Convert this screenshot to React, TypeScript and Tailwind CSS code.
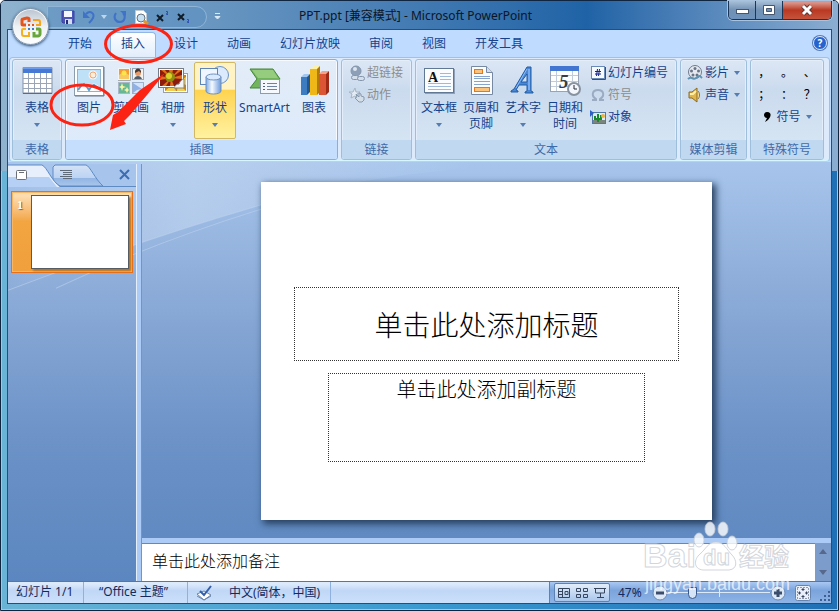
import type { ReactNode } from "react"
import clsx from "clsx"

const tabs = ["开始", "插入", "设计", "动画", "幻灯片放映", "审阅", "视图", "开发工具"]

function Icon({ size = 16, children }: { size?: number; children: ReactNode }) {
  return (
    <svg width={size} height={size} viewBox={`0 0 ${size} ${size}`} className="shrink-0" aria-hidden="true">
      {children}
    </svg>
  )
}

function Arrow() {
  return (
    <svg width="6" height="4" viewBox="0 0 6 4" className="shrink-0" aria-hidden="true">
      <path d="M0 0h6L3 4z" fill="#567db1" />
    </svg>
  )
}

/* ---------- large ribbon icons ---------- */

const TableIcon = () => (
  <Icon size={32}>
    <rect x="2" y="3" width="29" height="25" fill="#fff" stroke="#8291a8" />
    <rect x="2" y="2" width="29" height="6" fill="#4679d3" />
    <rect x="2" y="2" width="29" height="2" fill="#6b9bea" />
    <path d="M2 13.500h29M2 18.500h29M2 23.500h29M7.500 8v20M13.500 8v20M19.500 8v20M25.500 8v20" stroke="#9aa6b8" />
    <path d="M2 28.500h29" stroke="#5b6b84" />
  </Icon>
)

const PictureIcon = () => (
  <Icon size={32}>
    <rect x="1.500" y="1.500" width="29" height="29" fill="#fdfeff" stroke="#8e9dab" />
    <path d="M2 31h29V2" fill="none" stroke="#66788a" />
    <rect x="4.500" y="4.500" width="23" height="22" fill="#bfe1f8" stroke="#8fb4d0" />
    <circle cx="20" cy="10" r="4.500" fill="#fff" opacity=".7" />
    <circle cx="20" cy="10" r="3" fill="#fdeedd" stroke="#f3a673" />
    <path d="M5 25c4-9 7-9 11-2 3-6 6-6 11 0v3H5z" fill="#fff" />
    <path d="M5 25l3-4 3-2 3 3 2 3 2-3 3-2 3 2 3 3" stroke="#5c9ac9" strokeWidth="2" fill="none" />
  </Icon>
)

const ClipArtIcon = () => (
  <Icon size={32}>
    <rect x="3.500" y="3.500" width="11" height="11" fill="#f59a35" stroke="#f2f5f8" />
    <path d="M4 10c4-3 7-2 10 0v4H4z" fill="#f7c95e" />
    <circle cx="9" cy="8" r="2.500" fill="#fbe54d" />
    <path d="M3 15.500h12.500V3" fill="none" stroke="#a5a9b0" />
    <rect x="17.500" y="3.500" width="11" height="11" fill="#f4f2ee" stroke="#9aa7b8" />
    <circle cx="23" cy="8" r="3" fill="#e79a68" />
    <path d="M20 8c-1-6 7-6 6 0l-2-2z" fill="#463932" />
    <path d="M19 14c1-4 7-4 8 0z" fill="#555c69" />
    <rect x="3.500" y="17.500" width="11" height="11" fill="#66b795" stroke="#aab7c6" />
    <path d="M7 18l1 3 3 1-3 1-1 3-1-3-2-1 2-1zM12 22l1 2 1 1-1 1-1 2-1-2-2-1 2-1z" fill="#f8f4a4" />
    <rect x="17.500" y="17.500" width="11" height="11" fill="#d5e3f8" stroke="#9db0cb" />
    <path d="M18 18l9 6-5 1-4 3z" fill="#8fb1e8" />
  </Icon>
)

const AlbumIcon = () => (
  <Icon size={32}>
    <rect x="6.500" y="8.500" width="24" height="19" fill="#fff" stroke="#9ba0a8" />
    <rect x="8" y="10" width="21" height="16" fill="#c68418" />
    <path d="M8 26l8-7 3 7zM20 26l1-8 8 8zM22 17l7-5v8z" fill="#f2ce4c" />
    <rect x="1.500" y="3.500" width="25" height="19" fill="#fff" stroke="#777d88" />
    <rect x="3" y="5" width="22" height="16" fill="#8c1b0c" />
    <path d="M14 13L4 5h4zM14 13L12 5h4zM14 13l7-8h4zM14 13l11-3v4zM14 13L3 11v4zM14 13L5 21h4zM14 13l-1 8h4z" fill="#e0701c" />
    <circle cx="13" cy="12" r="5" fill="#8d8d10" />
    <circle cx="12" cy="11" r="3" fill="#e0cf27" />
    <path d="M17 23c1-3 3-4 5-4 1-3 3-5 5-5v9z" fill="#f2f4f6" stroke="#838890" />
  </Icon>
)

const ShapesIcon = () => (
  <Icon size={32}>
    <defs>
      <linearGradient id="cylinder">
        <stop offset="0" stopColor="#7fabe6" />
        <stop offset=".4" stopColor="#f6faff" />
        <stop offset="1" stopColor="#6a98dc" />
      </linearGradient>
    </defs>
    <circle cx="21" cy="10" r="8.500" fill="#dceafd" stroke="#6b93c6" />
    <rect x="1.500" y="3.500" width="17" height="16" fill="#eff6ff" stroke="#5d83b7" />
    <path d="M7 12v14c0 4 15 4 15 0V12z" fill="url(#cylinder)" stroke="#6f92bf" />
    <ellipse cx="14.500" cy="12" rx="7.500" ry="3" fill="#d9e9ff" stroke="#6f92bf" />
  </Icon>
)

const SmartArtIcon = () => (
  <Icon size={32}>
    <path d="M1 4h23l7 10-7 9H1l7-9z" fill="#72b45c" stroke="#45873a" />
    <path d="M3 5h21l5 8H9z" fill="#a4d58d" opacity=".7" />
    <rect x="11.500" y="14.500" width="19" height="14" fill="#f5f8fc" stroke="#8c9bae" />
    <path d="M14 18.500h2M14 21.500h2M14 24.500h2" stroke="#4d627f" />
    <path d="M18 18.500h10M18 21.500h10M18 24.500h10" stroke="#6f83a0" />
  </Icon>
)

const ChartIcon = () => (
  <Icon size={32}>
    <path d="M3 12l3-3h6l-3 3z" fill="#a2c7ee" />
    <path d="M3 12h6v18H3z" fill="#3e7cc2" />
    <path d="M9 12l3-3v18l-3 3z" fill="#215794" />
    <path d="M12 4l4-3h6l-3 3z" fill="#fff1a2" />
    <path d="M12 4h7v26h-7z" fill="#f0b719" />
    <path d="M19 4l3-3v26l-3 3z" fill="#b17b05" />
    <path d="M21 9l3-3h7l-3 3z" fill="#f5a28b" />
    <path d="M21 9h7v21h-7z" fill="#dc5534" />
    <path d="M28 9l3-3v21l-3 3z" fill="#9f2b17" />
  </Icon>
)

const TextBoxIcon = () => (
  <Icon size={32}>
    <rect x="1.500" y="3.500" width="29" height="24" fill="#fafcff" stroke="#617895" />
    <path d="M2 28.500h30M31.500 4v24" stroke="#8fa1b8" />
    <path d="M17 8.500h11M17 11.500h11M17 14.500h11M5 18.500h23M5 21.500h23M5 24.500h23" stroke="#9fb9d8" />
    <text x="5" y="17" fontSize="14" fontWeight="bold" fontFamily="Liberation Serif, serif" fill="#111">A</text>
  </Icon>
)

const HeaderIcon = () => (
  <Icon size={32}>
    <path d="M6.500 1.500h15l6 6v22h-21z" fill="#fbfcfe" stroke="#7789a2" />
    <path d="M21.500 1.500v6h6" fill="#d5dfea" stroke="#7789a2" />
    <rect x="9.500" y="4.500" width="8" height="4" fill="#fbc37b" stroke="#dd7a1f" />
    <path d="M9 11.500h16M9 13.500h16M9 16.500h16M9 19.500h16" stroke="#88a5c9" />
    <rect x="9.500" y="22.500" width="15" height="4" fill="#fbc37b" stroke="#dd7a1f" />
  </Icon>
)

const WordArtIcon = () => (
  <Icon size={32}>
    <path d="M20 2L7 24l-3 2v1h7v-1l-2-1 3-5h8v6l-2 1v1h8v-1l-2-1V2zM20 9v8h-6z" fill="#4b87d4" stroke="#205ca9" />
    <path d="M20 4L9 23" stroke="#8dbdf2" />
    <path d="M22 4v21" stroke="#79acf0" strokeWidth="2" />
  </Icon>
)

const DateIcon = () => (
  <Icon size={32}>
    <rect x="1.500" y="1.500" width="28" height="25" fill="#fdfeff" stroke="#98a4b6" />
    <rect x="1" y="1" width="29" height="5" fill="#4376d1" />
    <path d="M2 10.500h27M2 16.500h27M2 21.500h27M7.500 6v20M23.500 6v20" stroke="#c1cbd9" />
    <text x="10" y="23" fontSize="19" fontWeight="bold" fontStyle="italic" fontFamily="Liberation Serif, serif" fill="#3a3d42">5</text>
    <circle cx="25" cy="24" r="6" fill="#f4f7fb" stroke="#8792a1" strokeWidth="2" />
    <path d="M25 20v4h3" stroke="#252b35" fill="none" />
  </Icon>
)

/* ---------- small ribbon icons ---------- */

const LinkIcon = () => (
  <Icon>
    <circle cx="7" cy="6" r="5" fill="#8d9fb6" stroke="#8495ac" />
    <circle cx="6" cy="4" r="2" fill="#dce5ef" />
    <rect x="2.500" y="10.500" width="7" height="4" rx="2" fill="#d3deea" stroke="#8495ac" />
    <rect x="8.500" y="11.500" width="7" height="4" rx="2" fill="#d3deea" stroke="#8495ac" />
  </Icon>
)

const ActionIcon = () => (
  <Icon>
    <path d="M6 1l1 4h4L8 7l1 4-3-2-4 2 1-4-3-2h4z" fill="#e4ebf3" stroke="#a5b4c6" />
    <path d="M7 7l3 3V6l2 1v2l3 1v3l-2 2h-3l-4-4 2-1z" fill="#d4dee9" stroke="#8999ad" />
  </Icon>
)

const NumberIcon = () => (
  <Icon>
    <rect x="1.500" y="1.500" width="13" height="12" fill="#f7faff" stroke="#6a8bb8" />
    <path d="M15.500 2v12.500H2" fill="none" stroke="#2f527f" />
    <path d="M7.500 4L6.500 11M9.500 4L8.500 11M5 6.500h6M5 9h6" stroke="#12218c" />
  </Icon>
)

const OmegaIcon = () => (
  <Icon>
    <path d="M2 13h4v-1C1 9 2 3 8 3s7 6 2 9v1h4" fill="none" stroke="#9aabc2" strokeWidth="2" />
  </Icon>
)

const ObjectIcon = () => (
  <Icon>
    <rect x="2.500" y="3.500" width="13" height="11" fill="#dceafa" stroke="#5478a4" />
    <path d="M3 11h12v3H3z" fill="#7a857d" />
    <path d="M8 5v8M5 7v3h3M11 6v4H8" stroke="#168a28" strokeWidth="2" fill="none" />
    <circle cx="13" cy="7" r="2" fill="#efb338" />
    <path d="M0 1l4 3-4 4z" fill="#2d61c8" />
  </Icon>
)

const MovieIcon = () => (
  <Icon>
    <circle cx="8" cy="7" r="6.500" fill="#e6eaf0" stroke="#6e7a8b" />
    <circle cx="8" cy="3.500" r="1.500" fill="#677487" />
    <circle cx="4.500" cy="6" r="1.500" fill="#677487" />
    <circle cx="11.500" cy="6" r="1.500" fill="#677487" />
    <circle cx="6" cy="10" r="1.500" fill="#677487" />
    <circle cx="10" cy="10" r="1.500" fill="#677487" />
    <path d="M1 14c4-4 4 2 8-1s4-2 6 0" stroke="#5e93b3" strokeWidth="2" fill="none" />
  </Icon>
)

const SoundIcon = () => (
  <Icon>
    <path d="M2 5h3l5-4v14l-5-4H2z" fill="#e2b54a" stroke="#8b6b26" />
    <path d="M3 7h3l3-3" stroke="#fff0aa" strokeWidth="2" fill="none" />
    <path d="M11 4c2 2 2 6 0 8" fill="#f6de98" stroke="#8b7540" />
  </Icon>
)

/* ---------- ribbon building blocks ---------- */

function Group({ title, active, children }: { title: string; active?: boolean; children: ReactNode }) {
  return (
    <section
      aria-label={title}
      className={clsx(
        "flex flex-col rounded-[3px] border",
        active
          ? "border-[#85b0dc] bg-linear-to-b from-[#e3ecf8] to-[#dceafb] shadow-[inset_0_0_0_1px_#f7fbff]"
          : "border-[#9dbfdb] bg-linear-to-b from-[#dce7f5] via-[#cbdbee] via-30% to-[#d8e8f5] shadow-[inset_0_0_0_1px_#e3eefa]",
      )}
    >
      <div className="flex h-[80px] px-[2px] pt-[2px]">{children}</div>
      <h2
        className={clsx(
          "h-[19px] rounded-b-[2px] text-center text-[12px] leading-[19px] text-[#3e6aaa]",
          active ? "bg-[#c5defe]" : "bg-[#c0d8f0]",
        )}
      >
        {title}
      </h2>
    </section>
  )
}

type LargeProps = { icon: ReactNode; label: string; second?: string; menu?: boolean; wide?: boolean; hot?: boolean }

function LargeButton({ icon, label, second, menu, wide, hot }: LargeProps) {
  return (
    <button
      className={clsx(
        "flex h-[77px] flex-col items-center rounded-[2px] border pt-[2px] whitespace-nowrap",
        wide ? "w-[57px]" : "w-[42px]",
        hot
          ? "border-[#d3b863] bg-linear-to-b from-[#fff3c4] from-35% via-[#ffd34d] via-36% to-[#fff2a0]"
          : "border-transparent",
      )}
    >
      {icon}
      <span className="mt-[3px] text-[12px] leading-[16px]">{label}</span>
      {second && <span className="text-[12px] leading-[16px]">{second}</span>}
      {menu && (
        <span className="mt-[7px]">
          <Arrow />
        </span>
      )}
    </button>
  )
}

function SmallButton({ icon, label, menu, disabled }: { icon: ReactNode; label: string; menu?: boolean; disabled?: boolean }) {
  return (
    <button
      disabled={disabled}
      className={clsx("flex h-[22px] items-center gap-[2px] text-[12px] whitespace-nowrap", disabled && "text-[#8d8d8d]")}
    >
      {icon}
      <span>{label}</span>
      {menu && (
        <span className="ml-[3px]">
          <Arrow />
        </span>
      )}
    </button>
  )
}

function Ribbon() {
  return (
    <div className="mx-px flex gap-[3px] rounded-[4px] border border-[#a2c0e3] border-b-[#8fe5f2] bg-[#dceafb] px-[2px] py-px text-[#15428b] shadow-[inset_0_-1px_0_#d6f7ff]">
      <Group title="表格">
        <div className="px-px">
          <LargeButton icon={<TableIcon />} label="表格" menu />
        </div>
      </Group>
      <Group title="插图" active>
        <LargeButton icon={<PictureIcon />} label="图片" />
        <LargeButton icon={<ClipArtIcon />} label="剪贴画" />
        <LargeButton icon={<AlbumIcon />} label="相册" menu />
        <LargeButton icon={<ShapesIcon />} label="形状" menu hot />
        <LargeButton icon={<SmartArtIcon />} label="SmartArt" wide />
        <LargeButton icon={<ChartIcon />} label="图表" />
      </Group>
      <Group title="链接">
        <div className="pr-[6px] pl-[5px]">
          <SmallButton icon={<LinkIcon />} label="超链接" disabled />
          <SmallButton icon={<ActionIcon />} label="动作" disabled />
        </div>
      </Group>
      <Group title="文本">
        <LargeButton icon={<TextBoxIcon />} label="文本框" menu />
        <LargeButton icon={<HeaderIcon />} label="页眉和" second="页脚" />
        <LargeButton icon={<WordArtIcon />} label="艺术字" menu />
        <LargeButton icon={<DateIcon />} label="日期和" second="时间" />
        <div className="pr-[6px] pl-[4px]">
          <SmallButton icon={<NumberIcon />} label="幻灯片编号" />
          <SmallButton icon={<OmegaIcon />} label="符号" disabled />
          <SmallButton icon={<ObjectIcon />} label="对象" />
        </div>
      </Group>
      <Group title="媒体剪辑">
        <div className="px-[4px]">
          <SmallButton icon={<MovieIcon />} label="影片" menu />
          <SmallButton icon={<SoundIcon />} label="声音" menu />
        </div>
      </Group>
      <Group title="特殊符号">
        <div className="w-[68px]">
          <div className="grid grid-cols-3 text-center text-[12px] leading-[22px] text-black">
            {["，", "。", "、", "；", "：", "？"].map((mark) => (
              <button key={mark}>{mark}</button>
            ))}
          </div>
          <div className="flex justify-center">
            <SmallButton
              icon={
                <svg width="12" height="10" viewBox="0 0 12 10" aria-hidden="true">
                  <path d="M4 0c6 0 4 7-2 10l2-4C0 6 0 0 4 0z" fill="#000" />
                </svg>
              }
              label="符号"
              menu
            />
          </div>
        </div>
      </Group>
    </div>
  )
}

/* ---------- title bar ---------- */

function OfficeButton() {
  return (
    <button
      aria-label="Office"
      className="absolute top-[7px] left-[11px] z-10 flex size-[37px] items-center justify-center rounded-full border border-[#8193a7] bg-linear-to-b from-[#b9c4d0] via-[#eef1f4] via-50% to-white shadow-[0_1px_3px_#1f4164,inset_0_0_0_1px_#f3f6f9]"
    >
      <svg width="24" height="24" viewBox="0 0 24 24" fill="none" strokeWidth="2" aria-hidden="true">
        <path d="M10 7V4c0-1-1-1-2-1L4 4C3 4 3 5 3 5v4c0 1 1 1 1 1h3" stroke="#e5541c" strokeWidth="3" />
        <path d="M14 5h5c1 0 2 1 2 2v3h-4" stroke="#f7a31b" />
        <path d="M7 14H4c-1 0-1 1-1 1v4c0 1 1 2 2 2h5v-4" stroke="#f4b11d" />
        <path d="M17 14h3c1 0 1 1 1 1v4c0 1-1 2-2 2h-4v-4" stroke="#67a739" strokeWidth="3" />
        <path d="M9 10h2M13 10h2" stroke="#e5541c" />
        <path d="M9 14h2M13 14h2" stroke="#3b7bd0" />
      </svg>
    </button>
  )
}

function TitleBar() {
  return (
    <header className="relative flex h-[28px] items-start">
      <div className="mt-[5px] ml-[40px] flex h-[22px] w-[160px] items-center gap-[5px] rounded-r-full border border-[#8fb4d6] bg-[#5b90c0]/60 pl-[12px]">
        <button aria-label="保存">
          <Icon>
            <path d="M2 2h12v12H3l-1-1z" fill="#4b54b8" stroke="#3a41a0" />
            <path d="M4 2h8v6H4z" fill="#f4f7fd" />
            <path d="M5 10h7v5H5z" fill="#d5dcee" />
            <path d="M6 11h2v4H6z" fill="#252b76" />
          </Icon>
        </button>
        <button aria-label="撤消" className="flex items-center gap-[4px]">
          <Icon>
            <path d="M5 5c4-4 9-1 7 4-1 2-2 3-4 5" stroke="#3f72c8" strokeWidth="2" fill="none" />
            <path d="M2 2v7h7z" fill="#3f72c8" />
          </Icon>
          <svg width="6" height="4" viewBox="0 0 6 4" aria-hidden="true">
            <path d="M0 0h6L3 4z" fill="#bdd6ee" />
          </svg>
        </button>
        <button aria-label="恢复">
          <Icon>
            <path d="M4 4c-3 4-1 9 4 9s6-6 3-9" stroke="#3f72c8" strokeWidth="2" fill="none" />
            <path d="M8 2h6v5z" fill="#3f72c8" />
          </Icon>
        </button>
        <button aria-label="打印预览">
          <Icon>
            <path d="M2.500 1.500h8l3 3v10h-11z" fill="#fff" stroke="#c1c9d2" />
            <circle cx="8" cy="9" r="4" fill="#c9e0f2" stroke="#647384" />
            <path d="M11 12l4 3" stroke="#df972b" strokeWidth="3" />
          </Icon>
        </button>
        <button aria-label="上标">
          <Icon>
            <path d="M3 6l6 6M9 6l-6 6" stroke="#111c29" strokeWidth="2" />
            <path d="M12 2.500h1.500v2H12.500v1H14" stroke="#2a4fae" fill="none" />
          </Icon>
        </button>
        <button aria-label="下标">
          <Icon>
            <path d="M3 5l6 6M9 5l-6 6" stroke="#111c29" strokeWidth="2" />
            <path d="M12 10.500h1.500v2H12.500v1H14" stroke="#2a4fae" fill="none" />
          </Icon>
        </button>
      </div>
      <button aria-label="自定义快速访问工具栏" className="mt-[12px] ml-[7px]">
        <svg width="7" height="8" viewBox="0 0 7 8" aria-hidden="true">
          <path d="M1 .5h5M1 3.500h5L3.500 6z" stroke="#dbe8f5" fill="#dbe8f5" />
        </svg>
      </button>
      <h1 className="flex-1 pt-[7px] pl-[78px] text-[12px] leading-[16px] whitespace-nowrap text-[#0b1526]">
        PPT.ppt [兼容模式] - Microsoft PowerPoint
      </h1>
      <div className="flex h-[19px] overflow-hidden rounded-b-[5px] border border-t-0 border-[#1b3557] shadow-[0_0_0_1px_#a9c3de]">
        <button aria-label="最小化" className="flex w-[27px] items-center justify-center border-r border-[#1b3557] bg-linear-to-b from-[#a9c0d8] via-[#7291b4] via-50% to-[#6d93bd]">
          <span className="mt-[3px] h-[5px] w-[13px] border border-[#46566c] bg-white" />
        </button>
        <button aria-label="还原" className="flex w-[27px] items-center justify-center border-r border-[#1b3557] bg-linear-to-b from-[#a9c0d8] via-[#7291b4] via-50% to-[#6d93bd]">
          <svg width="13" height="11" viewBox="0 0 13 11" aria-hidden="true">
            <path d="M.5.500h11v9H.5z" fill="#fff" stroke="#46566c" />
            <path d="M3.500 3.500h5v3h-5z" fill="#7291b4" stroke="#46566c" />
          </svg>
        </button>
        <button aria-label="关闭" className="flex w-[48px] items-center justify-center bg-linear-to-b from-[#d9938a] from-10% via-[#b93822] via-50% to-[#c5533b]">
          <svg width="14" height="12" viewBox="0 0 14 12" aria-hidden="true">
            <path d="M3 2l8 8M11 2l-8 8" stroke="#5f3634" strokeWidth="5" />
            <path d="M3 2l8 8M11 2l-8 8" stroke="#fff" strokeWidth="3" />
          </svg>
        </button>
      </div>
    </header>
  )
}

function TabBar() {
  return (
    <nav className="flex h-[27px] items-end pr-[4px] pl-[49px]">
      <div className="flex flex-1 gap-[7px]">
        {tabs.map((tab) => (
          <button
            key={tab}
            className={clsx(
              "flex h-[25px] items-start rounded-t-[4px] border border-b-0 px-[10px] text-[12px] leading-[22px] whitespace-nowrap text-[#15428b]",
              tab === "插入" ? "border-[#91b6e5] bg-linear-to-b from-white to-[#e1edfb]" : "border-transparent",
            )}
          >
            {tab}
          </button>
        ))}
      </div>
      <button
        aria-label="帮助"
        className="mb-[7px] size-[14px] rounded-full border border-[#dbe8ff] bg-[#2564cf] text-[10px] leading-[12px] font-bold text-white shadow-[0_0_0_1px_#5579b5]"
      >
        ?
      </button>
    </nav>
  )
}

/* ---------- work area ---------- */

function Backdrop() {
  return (
    <svg className="absolute inset-0 size-full" viewBox="0 0 824 418" preserveAspectRatio="none" aria-hidden="true">
      <defs>
        <linearGradient id="sky" x2="0" y2="1">
          <stop offset="0" stopColor="#a7c5ec" />
          <stop offset=".3" stopColor="#8dacd8" />
          <stop offset=".65" stopColor="#6d93c8" />
          <stop offset="1" stopColor="#5b86bf" />
        </linearGradient>
        <linearGradient id="glow">
          <stop offset="0" stopColor="#c1d5f0" stopOpacity="0" />
          <stop offset=".16" stopColor="#c1d5f0" stopOpacity=".4" />
          <stop offset=".3" stopColor="#c1d5f0" stopOpacity=".65" />
          <stop offset=".75" stopColor="#c1d5f0" stopOpacity="0" />
        </linearGradient>
      </defs>
      <path d="M0 0h824v418H0z" fill="url(#sky)" />
      <path d="M0 128Q140 75 270 38T620 0H0z" fill="url(#glow)" />
      <path d="M0 128Q140 75 270 38M48 126Q150 78 270 42" stroke="#c3d7f2" strokeOpacity=".5" fill="none" />
    </svg>
  )
}

function SlidePanel() {
  return (
    <aside className="relative w-[128px] shrink-0">
      <div className="relative flex h-[23px] items-center border-b border-[#5e8bc4] bg-[#a6c4ec]">
        <svg className="absolute inset-0" width="110" height="23" viewBox="0 0 110 23" aria-hidden="true">
          <defs>
            <linearGradient id="tab" x2="0" y2="1">
              <stop offset="0" stopColor="#d4e3f7" />
              <stop offset=".6" stopColor="#bcd3f2" />
              <stop offset=".61" stopColor="#91b4e2" />
              <stop offset="1" stopColor="#a9c6ec" />
            </linearGradient>
          </defs>
          <path d="M45 22V3l2-2h31c4 1 9 14 17 21z" fill="url(#tab)" stroke="#5e8bc4" />
          <path d="M0 23V1h34c5 2 10 17 18 22z" fill="#e6effb" />
          <path d="M0 23V13h41l8 10z" fill="#b5d0f4" />
          <path d="M0 1h34c5 2 10 17 18 21" fill="none" stroke="#5e8bc4" />
        </svg>
        <button aria-label="幻灯片" className="relative ml-[8px]">
          <svg width="12" height="11" viewBox="0 0 12 11" aria-hidden="true">
            <rect x=".5" y=".5" width="10" height="9" rx="1" fill="#fff" stroke="#6a6f78" />
            <path d="M3 2.500h5" stroke="#6a6f78" />
          </svg>
        </button>
        <button aria-label="大纲" className="relative ml-[32px] flex-1">
          <svg width="12" height="10" viewBox="0 0 12 10" aria-hidden="true">
            <path d="M0 .5h12M3 2.500h9M3 4.500h9M0 6.500h12M3 8.500h9" stroke="#5e6a7a" />
          </svg>
        </button>
        <button aria-label="关闭窗格" className="mr-[5px]">
          <svg width="12" height="12" viewBox="0 0 12 12" aria-hidden="true">
            <path d="M1 1l9 9M10 1L1 10" stroke="#3c6db0" strokeWidth="2" />
          </svg>
        </button>
      </div>
      <button className="mt-[4px] ml-[3px] flex h-[82px] w-[122px] gap-[7px] border border-[#e8701a] bg-linear-to-b from-[#fcdcae] from-5% via-[#f2a541] via-37% to-[#f0a03c] py-[3px] pl-[4px] shadow-[inset_0_0_0_1px_#f9b765]">
        <span className="w-[8px] font-['Liberation_Serif',serif] text-[12px] leading-[20px] font-bold text-white [text-shadow:1px_1px_1px_#7a5a30]">1</span>
        <span className="h-[74px] w-[98px] border border-[#555c64] bg-white shadow-[2px_2px_2px_#b7701c]" />
      </button>
    </aside>
  )
}

function Workspace() {
  return (
    <main className="relative flex flex-1 bg-[#6d93c8] pt-[2px]">
      <Backdrop />
      <SlidePanel />
      <div className="relative w-[6px] border-r border-[#6d96cf] border-l border-l-[#e5effc] bg-[#accbf6]" />
      <div className="relative flex min-w-0 flex-1 flex-col">
        <div className="flex flex-1 items-center justify-center">
          <article className="flex aspect-[4/3] w-[65.5%] flex-col bg-white font-['Noto_Sans_CJK_SC',sans-serif] font-light text-black shadow-[3px_3px_7px_1px_#27405f]">
            <h2 className="mx-[33px] mt-[105px] flex h-[74px] items-center justify-center border border-dotted border-[#333] text-[28px] leading-[36px]">
              单击此处添加标题
            </h2>
            <p className="mx-[67px] mt-[12px] h-[89px] border border-dotted border-[#333] text-center text-[20px] leading-[30px]">
              单击此处添加副标题
            </p>
          </article>
        </div>
        <div className="flex h-[43px] border-t-[5px] border-[#accbf6] bg-white">
          <textarea
            aria-label="备注"
            defaultValue="单击此处添加备注"
            className="flex-1 resize-none overflow-hidden border-t border-[#6289bd] px-[10px] pt-[4px] font-['Noto_Sans_CJK_SC',sans-serif] text-[16px] leading-[24px] font-light text-black outline-none"
          />
          <div className="flex w-[16px] flex-col items-center justify-between bg-[#7c9dcb] py-[6px]">
            <button aria-label="向上">
              <svg width="8" height="5" viewBox="0 0 8 5" aria-hidden="true">
                <path d="M0 5h8L4 0z" fill="#56698c" />
              </svg>
            </button>
            <button aria-label="向下">
              <svg width="8" height="5" viewBox="0 0 8 5" aria-hidden="true">
                <path d="M0 0h8L4 5z" fill="#56698c" />
              </svg>
            </button>
          </div>
        </div>
      </div>
    </main>
  )
}

/* ---------- status bar ---------- */

const viewIcons = [
  { name: "普通视图", d: "M1.500 2.500h11v9h-11zM5.500 3v8M8 5.500h3v3H8zM2 5.500h3M2 8.500h3" },
  { name: "幻灯片浏览", d: "M1.500 2.500h4v3h-4zM8.500 2.500h4v3h-4zM1.500 8.500h4v3h-4zM8.500 8.500h4v3h-4z" },
  { name: "幻灯片放映", d: "M1 2.500h12M2.500 3v4h9V3M7.500 7v4M4 11.500h7" },
]

function StatusBar() {
  return (
    <footer className="flex h-[22px] items-stretch border-t border-[#4f78b0] bg-linear-to-b from-[#dceafc] from-10% via-[#c0d7f5] via-40% to-[#cbe0fb] text-[12px] leading-[20px] whitespace-nowrap text-[#15295a]">
      <span className="w-[76px] border-r border-[#8fb1dd] pl-[8px]">幻灯片 1/1</span>
      <span className="w-[104px] border-r border-[#8fb1dd] pl-[15px]">“Office 主题”</span>
      <button className="flex w-[143px] items-center gap-[17px] border-r border-[#8fb1dd] pl-[8px]">
        <Icon>
          <path d="M1 9l7-3 7 4-7 5z" fill="#fff" stroke="#6b87ad" />
          <path d="M1 11l7 4 7-4" fill="none" stroke="#6b87ad" />
          <path d="M4 6l4 4 7-9" stroke="#3560a9" strokeWidth="2" fill="none" />
        </Icon>
        中文(简体，中国)
      </button>
      <span className="flex-1" />
      <div className="flex items-center border-l border-[#5c81b5] bg-linear-to-b from-[#a9c8f2] via-[#7ba4dc] via-40% to-[#8fb4e6] pl-[4px]">
        <div className="flex rounded-[2px] border border-[#5c81b5] bg-linear-to-b from-[#e2edfa] to-[#a9c6eb]">
          {viewIcons.map((view) => (
            <button key={view.name} aria-label={view.name} className="flex h-[17px] w-[18px] items-center justify-center">
              <svg width="14" height="14" viewBox="0 0 14 14" aria-hidden="true">
                <path d={view.d} fill="none" stroke="#37455e" />
              </svg>
            </button>
          ))}
        </div>
        <button className="ml-[8px] w-[34px] text-left">47%</button>
        <button aria-label="缩小">
          <Icon>
            <circle cx="8" cy="8" r="7" fill="#dde8f7" stroke="#6b87b3" />
            <path d="M4 8h8" stroke="#3c4d6c" strokeWidth="3" />
          </Icon>
        </button>
        <input
          type="range"
          aria-label="显示比例"
          min="0"
          max="100"
          defaultValue="21"
          className="h-[14px] w-[102px] appearance-none bg-[linear-gradient(#dce9f9,#dce9f9),linear-gradient(#dce9f9,#dce9f9)] bg-[length:100%_1px,1px_8px] bg-center bg-no-repeat [&::-webkit-slider-thumb]:h-[12px] [&::-webkit-slider-thumb]:w-[9px] [&::-webkit-slider-thumb]:appearance-none [&::-webkit-slider-thumb]:rounded-b-full [&::-webkit-slider-thumb]:border [&::-webkit-slider-thumb]:border-[#37588c] [&::-webkit-slider-thumb]:bg-[#d6e4f7]"
        />
        <button aria-label="放大">
          <Icon>
            <circle cx="8" cy="8" r="7" fill="#dde8f7" stroke="#6b87b3" />
            <path d="M4 8h8M8 4v8" stroke="#3c4d6c" strokeWidth="3" />
          </Icon>
        </button>
        <button aria-label="适应窗口" className="ml-[9px]">
          <Icon>
            <rect x=".5" y=".5" width="15" height="15" rx="2" fill="#e9f0f9" stroke="#6483ae" />
            <path d="M2.500 2.500h11v11h-11z" fill="none" stroke="#37455e" strokeDasharray="1 2" />
            <path d="M8 3v3M8 10v3M3 8h3M10 8h3M6.500 4.500h3M6.500 11.500h3M4.500 6.500v3M11.500 6.500v3" stroke="#37455e" />
          </Icon>
        </button>
        <svg width="12" height="12" viewBox="0 0 12 12" className="mt-[6px] ml-[8px]" aria-hidden="true">
          <path d="M9 1h2v2H9zM5 5h2v2H5zM9 5h2v2H9zM1 9h2v2H1zM5 9h2v2H5zM9 9h2v2H9z" fill="#3f5f93" />
        </svg>
      </div>
    </footer>
  )
}

/* ---------- overlays ---------- */

function Annotations() {
  return (
    <svg className="pointer-events-none absolute top-0 left-0 z-20" width="190" height="140" viewBox="1 1 190 140" aria-hidden="true">
      <ellipse cx="138.500" cy="44" rx="33" ry="18.500" fill="none" stroke="#fb2414" strokeWidth="3" />
      <ellipse cx="82" cy="105" rx="31" ry="20" fill="none" stroke="#fb2414" strokeWidth="3" />
      <path d="M165 73L140 90 118 112l-5 3-3 15 16-6-2-3 6-6 17-20z" fill="#fb2414" />
    </svg>
  )
}

function Watermark() {
  return (
    <svg
      className="pointer-events-none absolute right-[40px] bottom-[14px] z-20"
      width="155"
      height="78"
      viewBox="0 0 155 78"
      fill="#fff"
      fillOpacity=".8"
      stroke="#c6cbd3"
      strokeOpacity=".8"
    >
      <ellipse cx="56" cy="22" rx="5" ry="7" />
      <ellipse cx="67" cy="11" rx="5" ry="7" />
      <ellipse cx="80" cy="11" rx="5" ry="7" />
      <ellipse cx="89" cy="25" rx="5" ry="7" />
      <path d="M73 24c8 0 11 8 16 13s6 14-3 15H60c-10-1-9-11-3-16s8-12 16-12z" />
      <text x="0" y="49" fontSize="34" fontWeight="bold" fontFamily="Liberation Sans, sans-serif">Bai</text>
      <text x="60" y="47" fontSize="22" fontWeight="bold" fontFamily="Liberation Sans, sans-serif">du</text>
      <text x="96" y="48" fontSize="25" fontWeight="bold" fontFamily="Noto Sans CJK SC, sans-serif">经验</text>
      <text x="2" y="72" fontSize="18" stroke="none" fillOpacity=".7" fontFamily="Liberation Sans, sans-serif">jingyan.baidu.com</text>
    </svg>
  )
}

export default function App() {
  return (
    <div className="relative flex min-h-screen flex-col rounded-t-[5px] border border-[#10253f] bg-linear-to-r from-[#69b4d6] via-[#3b9ad0] to-[#1f6fb5] font-['Noto_Sans','Noto_Sans_CJK_SC',sans-serif] shadow-[inset_0_0_0_1px_#8fd0e8]">
      <div className="absolute inset-x-0 top-0 h-[170px] rounded-t-[4px] bg-linear-to-r from-[#8fb3cf] via-[#1f63a6] via-70% to-[#8badd1]" />
      <OfficeButton />
      <div className="relative flex flex-1 flex-col px-[6px] pb-[6px]">
        <TitleBar />
        <div className="flex flex-1 flex-col border border-[#284d78] bg-[#bfdbff]">
          <TabBar />
          <Ribbon />
          <Workspace />
          <StatusBar />
        </div>
      </div>
      <Annotations />
      <Watermark />
    </div>
  )
}
